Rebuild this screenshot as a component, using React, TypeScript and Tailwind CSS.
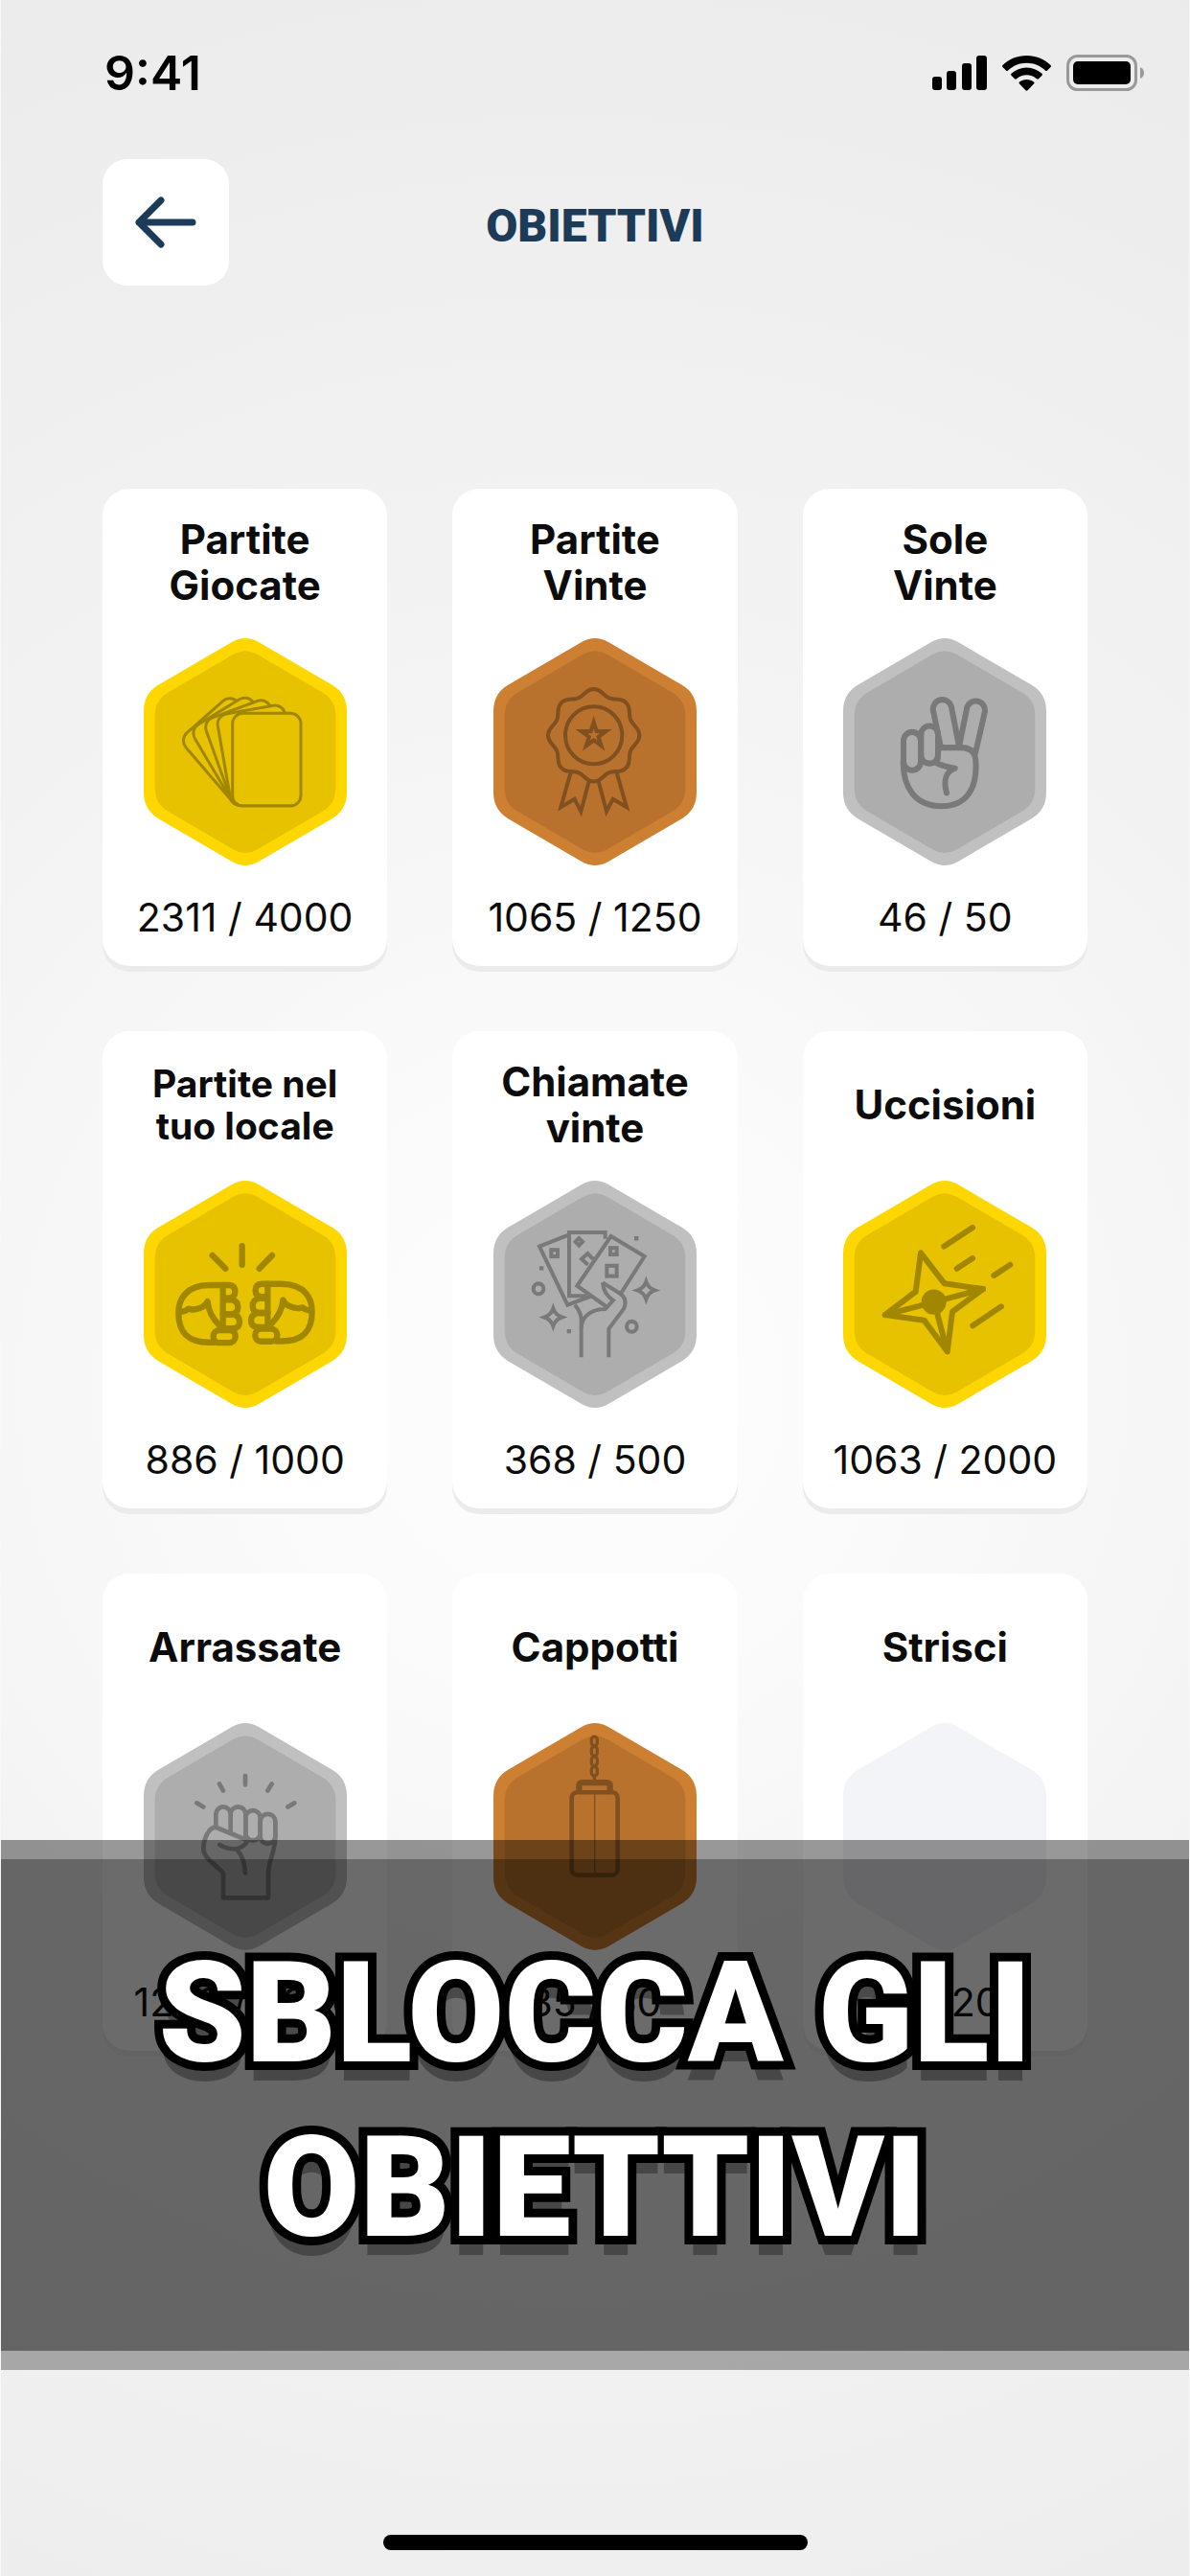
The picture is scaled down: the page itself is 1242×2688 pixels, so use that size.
import React from "react";

type Tier = "gold" | "silver" | "bronze" | "locked";

type Achievement = {
  title: string[];
  progress: string;
  tier: Tier;
  small?: boolean;
  Icon?: () => React.ReactElement;
};

// ring = outer hexagon, face = inner hexagon, ink = drawing
const tiers = {
  gold: { ring: "fill-[#ffd700]", face: "fill-[#e6c200]", ink: "text-[#a18700]" },
  silver: { ring: "fill-[#c0c0c0]", face: "fill-[#adadad]", ink: "text-[#797979]" },
  bronze: { ring: "fill-[#cd7f32]", face: "fill-[#b8722d]", ink: "text-[#815020]" },
  locked: { ring: "fill-[#f3f4f7]", face: "fill-[#f3f4f7]", ink: "text-[#f3f4f7]" },
};

const HEX =
  "M0 225Q0 171 47 144L276 12Q318 -12 360 12L589 144Q636 171 636 225V477Q636 531 589 558L360 690Q318 714 276 690L47 558Q0 531 0 477Z";

// Star polygon, also used for the hole in the medal star
const star = (cx: number, cy: number, outer: number, inner: number) => {
  const pts = Array.from({ length: 10 }, (_, i) => {
    const r = i % 2 === 0 ? outer : inner;
    const a = (Math.PI / 5) * i - Math.PI / 2;
    return `${(cx + r * Math.cos(a)).toFixed(1)} ${(cy + r * Math.sin(a)).toFixed(1)}`;
  });
  return `M${pts.join("L")}Z`;
};

// Wavy edge of the medal
const rosette = (cx: number, cy: number, radius: number, wave: number) => {
  const pts = Array.from({ length: 160 }, (_, i) => {
    const a = (Math.PI / 80) * i;
    const r = radius + wave * Math.cos(8 * a);
    return `${(cx + r * Math.cos(a)).toFixed(1)} ${(cy + r * Math.sin(a)).toFixed(1)}`;
  });
  return `M${pts.join("L")}Z`;
};

const CardsIcon = () => (
  <g className="fill-[#e6c200]" strokeWidth="9">
    {[-41, -31, -20, -10].map((angle) => (
      <rect
        key={angle}
        x="278"
        y="232"
        width="214"
        height="286"
        rx="32"
        transform={`translate(-8 -2) rotate(${angle} 310 486)`}
      />
    ))}
    <rect x="278" y="232" width="214" height="286" rx="32" />
  </g>
);

const MedalIcon = () => (
  <g strokeWidth="12">
    <path d={rosette(314, 300, 134, 9)} />
    <circle cx="314" cy="300" r="89" />
    <path
      d={star(314, 300, 60, 23) + star(314, 300, 20, 8)}
      fill="currentColor"
      fillRule="evenodd"
      stroke="none"
    />
    <path d="M242 415L211 522L254 497L274 535L299 442M386 415L417 522L374 497L354 535L329 442" />
  </g>
);

const PeaceIcon = () => (
  <g strokeWidth="18" strokeLinecap="round" strokeLinejoin="round">
    <rect x="189" y="290" width="54" height="118" rx="27" />
    <rect x="244" y="271" width="53" height="116" rx="26" />
    <path d="M306 338L282 225A29 29 0 0 1 339 213L363 335L388 213A29 29 0 0 1 444 226L414 355" />
    <path d="M306 338H372Q414 340 415 380C421 465 385 519 309 519C228 519 187 465 188 380" />
    <path d="M297 342V362Q297 374 291 385Q310 396 350 402C322 412 313 440 324 478" />
  </g>
);

const Fist = () => (
  <>
    <path d="M248 323H205C128 323 109 372 109 408C109 470 138 500 205 500H220" />
    <path d="M248 323H267Q286 324 286 343Q286 362 267 363H248Z" />
    <path d="M248 368H275Q295 372 295 391Q295 410 275 413H248Z" />
    <path d="M248 413H280Q300 418 300 436Q300 455 280 457H240" />
    <rect x="218" y="462" width="69" height="39" rx="19" />
    <path d="M248 413V457" />
    <path d="M116 405Q131 404 139 396Q160 402 180 392Q196 385 200 373C202 400 215 425 236 446" />
  </>
);

const FistsIcon = () => (
  <g strokeWidth="19" strokeLinecap="round" strokeLinejoin="round">
    <path d="M308 202V260M215 231L256 272M402 231L362 272" />
    <Fist />
    <g transform="translate(636 -4) scale(-1 1)">
      <Fist />
    </g>
  </g>
);

const Sparkle = ({ x, y }: { x: number; y: number }) => (
  <path
    transform={`translate(${x} ${y})`}
    d="M0 -27Q7 -7 27 0Q7 7 0 27Q-7 7 -27 0Q-7 -7 0 -27Z"
  />
);

const HandIcon = () => (
  <g strokeWidth="12">
    <path d="M235 168L144 203L232 384L306 357" />
    <path d="M350 180V160H237V356H292" />
    <path d="M400 347L473 234L368 172L262 325L352 388" />
    <path d="M342 315C344 345 360 360 375 370L350 397C305 397 277 420 275 455" />
    <path d="M342 315L395 348Q422 365 408 396L361 458V546" />
    <path d="M255 384Q275 408 275 430V546" />
    <rect x="181" y="214" width="20" height="20" />
    <rect x="366" y="208" width="20" height="20" />
    <rect x="355" y="263" width="31" height="32" />
    <path d="M268 178L279 189L268 200L257 189Z" />
    <path d="M312 242L295 225L276 242L296 260" />
    <circle cx="141" cy="334" r="16" />
    <circle cx="433" cy="451" r="16" />
    <Sparkle x={478} y={339} />
    <Sparkle x={187} y={422} />
    <path fill="currentColor" stroke="none" d="M441 172h13v13h-13zM144 264h13v13h-13zM230 459h13v13h-13z" />
  </g>
);

const ShurikenIcon = () => (
  <g strokeWidth="18" strokeLinecap="round" strokeLinejoin="round">
    <path d="M243 223L317 318L438 335L342 405L326 528L254 432L131 415L227 343Z" />
    <path d="M285 375L438 335M285 375L131 415M285 375L326 528" />
    <circle cx="284" cy="375" r="39" fill="currentColor" stroke="none" />
    <path d="M316 203L405 145M356 272L405 240M472 293L523 260M406 448L495 389" />
  </g>
);

const RaisedFistIcon = () => (
  <g strokeWidth="14" strokeLinecap="round" strokeLinejoin="round">
    <path d="M318 163V191M237 188L249 209M401 188L388 209M166 247L187 259M472 247L451 259" />
    <path d="M226 322V282A23 23 0 0 1 272 282V336M272 282A23 23 0 0 1 319 282V356" />
    <rect x="319" y="270" width="46" height="93" rx="23" />
    <rect x="365" y="281" width="47" height="92" rx="23" />
    <path d="M412 305V355C412 395 391 425 390 463V540H249V463C225 438 189 418 187 391C186 362 202 322 226 322L324 362" />
    <path d="M238 376Q265 392 292 388Q316 382 324 366M292 390Q316 418 318 463" />
  </g>
);

const PunchBagIcon = () => (
  <g strokeWidth="10">
    <rect x="307" y="42" width="18" height="28" rx="9" />
    <rect x="307" y="73" width="18" height="28" rx="9" />
    <rect x="307" y="104" width="18" height="28" rx="9" />
    <rect x="307" y="135" width="18" height="28" rx="9" />
    <path d="M316 166V180" />
    <path d="M268 208V194Q268 184 278 184H355Q365 184 365 194V208" strokeWidth="19" />
    <rect x="245" y="214" width="144" height="256" rx="18" strokeWidth="14" />
    <path d="M317 214V470" strokeWidth="4" />
  </g>
);

const achievements: Achievement[] = [
  { title: ["Partite", "Giocate"], progress: "2311 / 4000", tier: "gold", Icon: CardsIcon },
  { title: ["Partite", "Vinte"], progress: "1065 / 1250", tier: "bronze", Icon: MedalIcon },
  { title: ["Sole", "Vinte"], progress: "46 / 50", tier: "silver", Icon: PeaceIcon },
  { title: ["Partite nel", "tuo locale"], progress: "886 / 1000", tier: "gold", small: true, Icon: FistsIcon },
  { title: ["Chiamate", "vinte"], progress: "368 / 500", tier: "silver", Icon: HandIcon },
  { title: ["Uccisioni"], progress: "1063 / 2000", tier: "gold", Icon: ShurikenIcon },
  { title: ["Arrassate"], progress: "1258 / 2000", tier: "silver", Icon: RaisedFistIcon },
  { title: ["Cappotti"], progress: "35 / 50", tier: "bronze", Icon: PunchBagIcon },
  { title: ["Strisci"], progress: "0 / 20", tier: "locked" },
];

const Badge = ({ tier, Icon }: Pick<Achievement, "tier" | "Icon">) => {
  const colors = tiers[tier];
  return (
    <svg
      viewBox="0 0 636 702"
      preserveAspectRatio="none"
      className={`shrink-0 w-[212px] h-[237px] ${colors.ink}`}
      aria-hidden="true"
    >
      <path d={HEX} className={colors.ring} />
      <path d={HEX} className={colors.face} transform="translate(35 39) scale(0.89)" />
      {Icon && (
        <g fill="none" stroke="currentColor">
          <Icon />
        </g>
      )}
    </svg>
  );
};

const AchievementCard = ({ title, progress, tier, small, Icon }: Achievement) => (
  <li className="flex flex-col items-center pt-5 pb-[27px] rounded-[28px] bg-white shadow-[0_6px_0_#ebebeb]">
    <h2
      className={`flex flex-col justify-center h-[114px] mb-[22px] text-center font-bold ${
        small ? "text-[39px] leading-[44px]" : "text-[42px] leading-[48px]"
      }`}
    >
      {title.map((line) => (
        <span key={line}>{line}</span>
      ))}
    </h2>
    <Badge tier={tier} Icon={Icon} />
    <p className="mt-[30px] text-[41px] leading-[48px] whitespace-nowrap">{progress}</p>
  </li>
);

const StatusBar = () => (
  <div className="flex items-center justify-between h-[152px] pl-[108px] pr-[46px]">
    <span className="text-[50px] leading-none font-semibold text-black">9:41</span>
    <div className="flex items-center gap-4">
      <svg viewBox="0 0 57 36" className="w-[57px] h-9" aria-hidden="true">
        <rect x="0" y="22" width="10" height="14" rx="3" />
        <rect x="15" y="16" width="10" height="20" rx="3" />
        <rect x="31" y="8" width="10" height="28" rx="3" />
        <rect x="46" y="0" width="11" height="36" rx="3" />
      </svg>
      <svg viewBox="0 0 51 37" className="w-[51px] h-[37px]" aria-hidden="true">
        <path d="M25.5 0C35 0 44 3.500 50.500 10Q51.500 11 50.500 12L47 15.500Q46 16.500 45 15.500C39.500 10.500 33 7.800 25.500 7.800S11.500 10.500 6 15.500Q5 16.500 4 15.500L.5 12Q-.5 11 .5 10C7 3.500 16 0 25.500 0Z" />
        <path d="M25.500 12.500C31.500 12.500 37 14.800 41.500 18.800Q42.500 19.800 41.500 20.800L38 24.300Q37 25.200 36 24.300C33 21.700 29.500 20.300 25.500 20.300S18 21.700 15 24.300Q14 25.200 13 24.300L9.500 20.800Q8.500 19.800 9.500 18.800C14 14.800 19.500 12.500 25.500 12.500Z" />
        <path d="M25.500 25C28.500 25 31 26 33 27.600Q34 28.600 33 29.600L26.500 36.300Q25.500 37.200 24.500 36.300L18 29.600Q17 28.600 18 27.600C20 26 22.500 25 25.500 25Z" />
      </svg>
      <svg viewBox="0 0 82 38" className="w-[82px] h-[38px]" aria-hidden="true">
        <rect x="1.500" y="1.500" width="71" height="35" rx="10" fill="none" stroke="#999" strokeWidth="3" />
        <rect x="7" y="7" width="60" height="24" rx="5" />
        <path d="M77 13Q81 15 81 19T77 25Z" fill="#999" />
      </svg>
    </div>
  </div>
);

const App = () => {
  return (
    <main className="flex flex-col min-h-screen overflow-hidden border-x border-[#f8f8f8] bg-[radial-gradient(circle_at_48%_54%,#fefefe_0px,#fafafa_350px,#f3f3f3_800px,#efefef_1200px,#ebebeb_1600px)] font-[Inter,sans-serif] text-[#0c0c0c]">
      <StatusBar />

      <header className="grid grid-cols-[132px_1fr_132px] items-center px-[106px] mt-[14px]">
        <button
          type="button"
          aria-label="Indietro"
          className="flex items-center justify-center h-[132px] rounded-[26px] bg-white"
        >
          <svg viewBox="0 0 66 56" className="w-[66px] h-14" fill="none" stroke="#1c3b59" strokeWidth="7" strokeLinecap="round" strokeLinejoin="round" aria-hidden="true">
            <path d="M61 28H5M28 5L5 28L28 51" />
          </svg>
        </button>
        <h1 className="pt-2 text-center font-[Roboto,sans-serif] text-[48px] leading-none font-black text-[#1c3b59]">
          OBIETTIVI
        </h1>
      </header>

      <ul className="grid grid-cols-3 gap-[68px] px-[106px] mt-[212px]">
        {achievements.map((item) => (
          <AchievementCard key={item.title.join(" ")} {...item} />
        ))}
      </ul>

      {/* banner over the last row of cards */}
      <section className="relative -mt-[220px] pt-[71px] pb-[78px] border-y-[20px] border-t-black/40 border-b-black/30 bg-black/58 bg-clip-padding">
        <p className="text-center font-[Roboto,sans-serif] text-[146px] leading-[182px] font-black text-white [-webkit-text-stroke:18px_#000] [paint-order:stroke_fill] [text-shadow:0_20px_0_rgba(0,0,0,0.3)]">
          <span className="block">SBLOCCA GLI</span>
          <span className="block">OBIETTIVI</span>
        </p>
      </section>

      <div className="w-[443px] h-4 mx-auto mt-auto mb-[27px] rounded-full bg-black" />
    </main>
  );
};

export default App;
